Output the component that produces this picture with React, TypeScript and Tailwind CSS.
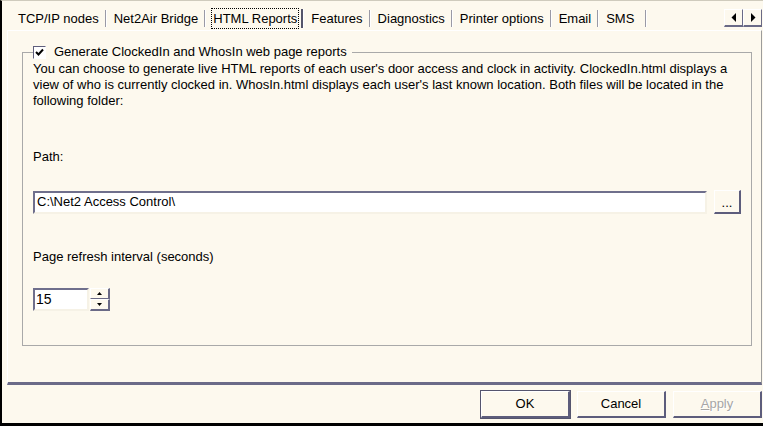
const tabs = ['TCP/IP nodes', 'Net2Air Bridge', 'HTML Reports', 'Features', 'Diagnostics', 'Printer options', 'Email', 'SMS'];

function Separator({ dark }: { dark?: boolean }) {
  if (dark) return <div className="h-[19px] w-[3px] border-l-2 border-[#55556a] border-r border-r-white" />;
  return <div className="h-[17px] w-[2px] border-l border-[#9a9aa6] border-r border-r-white" />;
}

function Arrow({ dir }: { dir: 'left' | 'right' }) {
  return (
    <div className="flex h-[18px] w-[19px] items-center justify-center border border-t-white border-l-white border-b-[#6a6a86] border-r-[#6a6a86] border-b-2">
      <svg width="6" height="9" viewBox="0 0 6 9">
        {dir === 'left' ? <polygon points="5,0 5,9 0.5,4.5" fill="#000" /> : <polygon points="1,0 1,9 5.5,4.5" fill="#000" />}
      </svg>
    </div>
  );
}

function XpButton({ children, primary, disabled }: { children: React.ReactNode; primary?: boolean; disabled?: boolean }) {
  return (
    <button
      className={`flex h-[27px] w-[89px] items-center justify-center border border-t-white border-l-white border-b-2 border-r-2 border-b-[#5d5d7c] border-r-[#5d5d7c] bg-[#fdf9ee] text-[13px] ${primary ? 'outline outline-1 outline-[#55556e]' : ''} ${disabled ? 'text-[#a6a6a6] [text-shadow:1px_1px_0_#fff]' : 'text-black'}`}
    >
      {children}
    </button>
  );
}

export default function App() {
  return (
    <div className="flex h-[426px] w-[763px] flex-col overflow-hidden border-t border-t-[#cfcbbd] border-l-2 border-l-black border-b-[3px] border-b-black bg-[#fdf9ee] text-black [font-family:'Liberation_Sans',Arial,sans-serif] text-[13px]">
      {/* Tabs */}
      <div className="flex h-[29px] items-center pl-[9px] pr-[1px] pt-[5px]">
        <div className="flex items-center">
          {tabs.map((tab, i) => (
            <div key={tab} className="flex items-center">
              {tab === 'HTML Reports' ? (
                <div className="ml-[5px] mr-[2px] border border-dotted border-black px-[1px] leading-[19px]">{tab}</div>
              ) : (
                <div className="pl-[7px] pr-[6px] leading-[19px]">{tab}</div>
              )}
              {i < tabs.length - 1 && <Separator dark={tab === 'HTML Reports'} />}
              {i === tabs.length - 1 && <div className="ml-[5px]"><Separator /></div>}
            </div>
          ))}
        </div>
        <div className="ml-auto flex">
          <Arrow dir="left" />
          <Arrow dir="right" />
        </div>
      </div>

      {/* Tab page */}
      <div className="ml-[5px] mr-[1px] flex h-[355px] flex-col border-t border-l border-t-white border-l-white border-r border-r-[#9c9c9c] border-b-[3px] border-b-[#6b6b88] pt-[13px]">
        <fieldset className="ml-[14px] mr-[12px] h-[302px] border border-[#a9a9a9] px-[10px]">
          <legend className="flex items-center gap-[8px] pl-0 pr-[5px] leading-[16px]">
            <span className="flex h-[13px] w-[13px] items-center justify-center border border-t-[#5f5f7c] border-l-[#5f5f7c] border-b-white border-r-white bg-white">
              <svg width="9" height="9" viewBox="0 0 9 9">
                <path d="M1 4 L3.5 6.5 L8 1.5" stroke="#000" strokeWidth="2" fill="none" />
              </svg>
            </span>
            <span>Generate ClockedIn and WhosIn web page reports</span>
          </legend>
          <p className="mt-[1px] leading-[16px]">
            <span className="block whitespace-nowrap">You can choose to generate live HTML reports of each user's door access and clock in activity. ClockedIn.html displays a</span>
            <span className="block whitespace-nowrap">view of who is currently clocked in. WhosIn.html displays each user's last known location. Both files will be located in the</span>
            <span className="block whitespace-nowrap">following folder:</span>
          </p>

          <div className="mt-[40px] leading-[16px]">Path:</div>
          <div className="mt-[25px] flex items-center gap-[7px]">
            <div className="flex h-[23px] w-[674px] items-center border-2 border-t-[#6f6f8c] border-l-[#6f6f8c] border-b-[#f6f2e6] border-r-[#f6f2e6] bg-white pl-[2px]">
              C:\Net2 Access Control\
            </div>
            <button className="flex h-[24px] w-[27px] items-end justify-center border border-t-white border-l-white border-b-2 border-r-2 border-b-[#5d5d7c] border-r-[#5d5d7c] pb-[4px] leading-[10px]">
              ...
            </button>
          </div>

          <div className="mt-[35px] leading-[16px]">Page refresh interval (seconds)</div>
          <div className="mt-[23px] flex items-center gap-[1px]">
            <div className="flex h-[23px] w-[56px] items-center border-2 border-t-[#6f6f8c] border-l-[#6f6f8c] border-b-[#f6f2e6] border-r-[#f6f2e6] bg-white pl-[1px] text-[14px]">
              15
            </div>
            <div className="flex h-[23px] w-[20px] flex-col">
              <div className="flex flex-1 items-center justify-center border border-t-white border-l-white border-b-[#6a6a86] border-r-2 border-r-[#6a6a86]">
                <svg width="5" height="3" viewBox="0 0 5 3"><polygon points="2.5,0 5,3 0,3" fill="#000" /></svg>
              </div>
              <div className="flex flex-1 items-center justify-center border border-t-white border-l-white border-b-2 border-b-[#6a6a86] border-r-2 border-r-[#6a6a86]">
                <svg width="5" height="3" viewBox="0 0 5 3"><polygon points="0,0 5,0 2.5,3" fill="#000" /></svg>
              </div>
            </div>
          </div>
        </fieldset>
      </div>

      {/* Buttons */}
      <div className="flex justify-end gap-[7px] pt-[6px] pr-[1px]">
        <XpButton primary>OK</XpButton>
        <XpButton>Cancel</XpButton>
        <XpButton disabled>
          <span><span className="underline">A</span>pply</span>
        </XpButton>
      </div>
    </div>
  );
}
